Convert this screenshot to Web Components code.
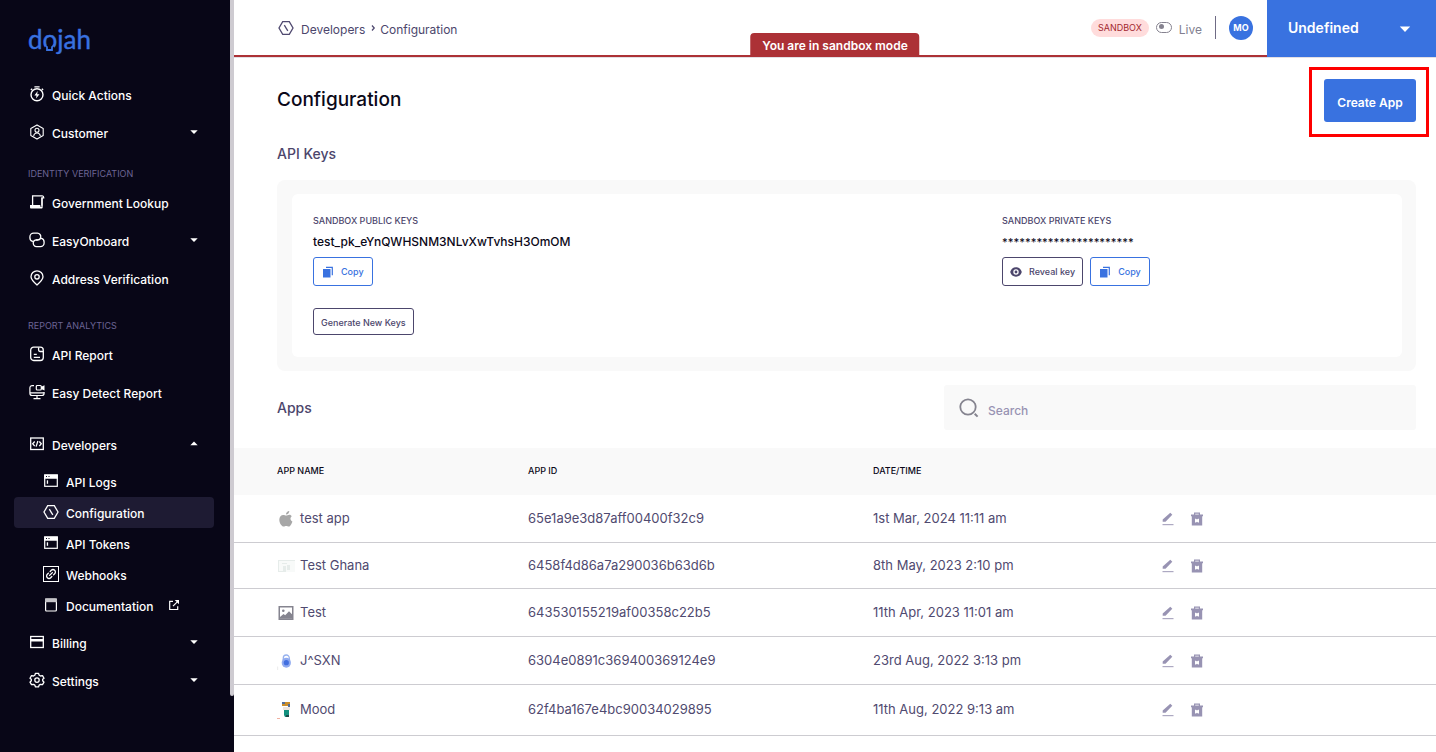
<!DOCTYPE html>
<html lang="en">
<head>
<meta charset="utf-8">
<meta name="viewport" content="width=device-width, initial-scale=1">
<title>Dojah – Configuration</title>
<style>
  html, body { margin: 0; }
  body {
    font-family: Inter, "Liberation Sans", sans-serif;
    font-size: 12px;
    color: #504a70;
    background: #fff;
    --blue: #3972e0;
    --red: #ac3136;
    --ink: #0b0818;
    --muted: #4c466c;
    --panel: #f9f9f9;
  }
</style>
</head>
<body>
<dj-app></dj-app>

<script>
const ICONS = {
  timer: [16, '<g fill="none" stroke="currentColor" stroke-width="1.4"><circle cx="8" cy="8.800" r="6"/><path d="M5.4 .9h5.2M1.900 3.900l1.300-1.200M14.100 3.900l-1.300-1.200"/></g><path fill="currentColor" d="M8.7 5.100 5.400 9.500h2.100l-.5 3.100 3.500-4.300H8.200z"/>'],
  customer: [16, '<g fill="none" stroke="currentColor" stroke-width="1.1"><path d="M8 .9 14.2 4.4v7.2L8 15.1 1.8 11.6V4.4z" stroke-linejoin="round"/><circle cx="8" cy="6.2" r="2"/><path d="M4.7 12.2c.2-2 1.5-3.2 3.3-3.2s3.1 1.200 3.300 3.200"/></g>'],
  scroll: [16, '<path d="M3.600 11V1.800h9.700c.9 0 1.400.6 1.400 2h-1.800v8" fill="none" stroke="currentColor" stroke-width="1.300"/><path fill="currentColor" d="M1 11h10.300v1.700h1.200V4h1.200v9.300c0 .9-.5 1.300-1.300 1.300H2.400C1.400 14.600 1 14 1 13z"/>'],
  rings: [16, '<g fill="none" stroke="currentColor" stroke-width="1.300" stroke-linecap="round"><path d="M3.600 9.400A3.700 3.700 0 0 1 .9 5.800V4.900A3.700 3.700 0 0 1 4.600 1.200h3.800a3.400 3.400 0 0 1 3.300 4.100c-.3 1.800-1.600 2.700-3.300 2.700H7.300"/><path d="M12.400 6.300a3.700 3.700 0 0 1 2.700 3.600v1a3.700 3.700 0 0 1-3.700 3.700H7.600a3.400 3.400 0 0 1-3.300-4.100c.3-1.800 1.600-2.700 3.300-2.700h1.100"/></g>'],
  pin: [16, '<g fill="none" stroke="currentColor" stroke-width="1.300"><path d="M8 15C4.600 12 2 9.600 2 6.800a6 6 0 0 1 12 0C14 9.600 11.400 12 8 15z"/><circle cx="8" cy="6.800" r="2.200"/></g>'],
  report: [16, '<g fill="none" stroke="currentColor" stroke-width="1.300"><rect x="1.700" y="1.200" width="12.600" height="13.300" rx="3"/><path d="M9.600 1.400v2.700c0 .9.500 1.400 1.400 1.400h3M4.800 8.300h3M4.800 11.300h6.200"/></g>'],
  monitor: [16, '<g fill="none" stroke="currentColor" stroke-width="1.200"><path d="M5 1.600H3.200C2 1.600.9 2.300.9 4v5.200c0 1.400.8 2.300 2.300 2.300h9.600c1.500 0 2.300-.9 2.300-2.300V8"/><path d="M1 8.900h14M8 11.500v2.800M4.500 14.600h7"/><rect x="7.300" y="1.500" width="5" height="4.500" rx="1"/></g><path fill="currentColor" d="M12.200 2.700 15.500 1.200v5.200L12.200 5z"/>'],
  code: [16, '<g fill="none" stroke="currentColor" stroke-width="1.300"><rect x="1.700" y="2" width="12.600" height="11.500"/><path d="M5.700 5.500 3.700 7.800l2 2.300M10.300 5.500l2 2.300-2 2.300M8.900 5l-1.800 5.600"/></g>'],
  window: [16, '<rect x="1.700" y="2" width="12.600" height="11.300" fill="none" stroke="currentColor" stroke-width="1.200"/><path fill="currentColor" fill-rule="evenodd" d="M1.200 1.500h13.600v4.300H1.200zM3 3v1h1V3zm2.500 0v1h1V3z"/><path fill="currentColor" d="M3.800 7.300h1.300v3.500H3.800z"/>'],
  hex: [16, '<g fill="none" stroke="currentColor" stroke-width="1.300"><path d="M4.700 1.700h6.600L15 8l-3.700 6.300H4.700L1 8z"/><path d="m6.300 5.200 3.500 5.600"/></g>'],
  link: [16, '<rect x=".500" y=".500" width="15" height="15" fill="none" stroke="currentColor" stroke-width="1"/><g transform="translate(8 8) rotate(-45)" fill="none" stroke="currentColor" stroke-width="1.300" stroke-linecap="round"><path d="M-1.200 2.400h-1.600a2.400 2.400 0 0 1 0-4.800h1.600M1.200-2.400h1.600a2.400 2.400 0 0 1 0 4.800H1.200M-2 0h4"/></g>'],
  doc: [16, '<rect x="2.600" y="2" width="10.800" height="12" rx="1" fill="none" stroke="currentColor" stroke-width="1.200"/><path fill="#c4c3c8" d="M2 1.400h12v3.800H2z"/>'],
  external: [12, '<g fill="none" stroke="currentColor" stroke-width="1.200"><path d="M5 2.300H1.700v8.200h8V7.200"/><path d="m5 7.200 5.300-5.300"/></g><path fill="currentColor" d="M6.700.9H11v4.300z"/>'],
  card: [16, '<rect x="1.700" y="2.500" width="12.600" height="11" fill="none" stroke="currentColor" stroke-width="1.300"/><path fill="currentColor" d="M1.200 5h13.600v2.500H1.200z"/>'],
  gear: [16, '<g fill="none" stroke="currentColor" stroke-width="1.300" stroke-linejoin="round"><path d="M6.500 1.300h3l.7 2 1.300.7 2-.4 1.500 2.600L13.700 7.300v1.400L15 10.200l-1.500 2.500-2-.4-1.300.8-.7 1.800h-3l-.7-1.800-1.300-.8-2 .4L1 10.200l1.300-1.500V7.300L1 6.200l1.500-2.600 2 .4 1.300-.7z"/><circle cx="8" cy="8.100" r="2.200"/></g>'],
  down: [8, '<path fill="currentColor" d="M.3 2.200h7.400L4 6z"/>'],
  up: [8, '<path fill="currentColor" d="M.3 5.200h7.400L4 1.400z"/>'],
  caret: [12, '<path fill="currentColor" d="M.8 3.500h10.400L6 9z"/>'],
  chevron: [8, '<path d="m3 1.500 2.200 2.500L3 6.500" fill="none" stroke="currentColor" stroke-width="1.300"/>'],
  copy: [12, '<path fill="currentColor" d="M1 3h7.500v8.500H1z"/><path d="M4 1.300h6.300v8" fill="none" stroke="currentColor" stroke-width="1.200"/>'],
  eye: [12, '<path fill="currentColor" fill-rule="evenodd" d="M6 1.300c2.900 0 5 1.900 5.800 4.700C11 8.800 8.900 10.700 6 10.700S1 8.800.2 6C1 3.200 3.100 1.300 6 1.300zM6 3.300a2.700 2.700 0 1 0 0 5.400 2.700 2.700 0 0 0 0-5.400z"/><circle cx="6" cy="6" r="1.400" fill="currentColor"/>'],
  search: [20, '<g fill="none" stroke="currentColor"><circle cx="9" cy="9" r="7.700" stroke-width="1.800"/><path d="m15.700 15.700 2.900 2.900" stroke-width="2"/></g>'],
  edit: [14, '<path fill="currentColor" d="m9.300.8 2 2-6.800 7H1.700V7.600z"/><path fill="currentColor" opacity=".8" d="M1.500 12h11v1.200h-11z"/>'],
  trash: [14, '<path fill="currentColor" fill-rule="evenodd" d="M4 2.500V.5h6v2h3v1.700h-.8v9.300H1.800V4.200H1V2.500zM5.200 1.700v.8h3.600v-.8zM5 6.700v3.800h1l1-.8 1 .8h1V6.700H8l-1 .8-1-.8z"/>'],
  apple: [18, '<path fill="#a7a7a7" d="M12.300 1c.1 1.800-1.500 3.600-3.300 3.500C8.800 2.800 10.500 1.100 12.300 1zM14.800 6.300c-1.900 1.200-1.800 4.100.6 5.100-.5 1.900-2.100 5.200-3.700 5.200-.9 0-1.400-.6-2.500-.6s-1.600.6-2.500.6C4.800 16.600 2.300 13 2.300 9.700c0-3 1.900-4.800 3.900-4.800 1.200 0 2 .7 2.900.7s1.800-.8 3.300-.8c1 0 1.900.6 2.400 1.500z"/>'],
  sheet: [18, '<path fill="#f8faf9" d="M1 3h17v12H1z"/><path fill="#e6ecea" d="M1 3h17v1H1zM5 6h5v1H5zM6 9h3v6H6zM10 8h3v5h-3zM1 14h6v1H1zM1 4h1v10H1z"/>'],
  image: [18, '<path fill="#85848f" fill-rule="evenodd" d="M1.500 2h15v14h-15zM3 3.400v11.200h12V3.400z"/><circle cx="6.300" cy="6.800" r="1.300" fill="#85848f"/><path fill="#85848f" d="m3 13 3.500-3 1.700 1.200L12 7.300l3 3v4.400H3z"/>'],
  lock: [18, '<path d="M6.300 8V6a3 3 0 0 1 6 0v2" fill="none" stroke="#96b1ee" stroke-width="1.300"/><ellipse cx="9.300" cy="10.700" rx="4.600" ry="5" fill="#8faaf0"/><circle cx="9.300" cy="10.700" r="2.600" fill="#426fe0"/><path fill="#ddd" d="M.5 14.500h.6V18H.5z"/>'],
  mood: [18, '<path fill="#c98d2b" d="M5 1h8v4H5z"/><path fill="#546d98" d="M5 1h3v2H5zM11 3h2v3h-2z"/><path fill="#eee5dd" d="M6 6h7v3H6z"/><path fill="#12917f" d="M7 9h5v5l-1 2H8l-1-2z"/><path fill="#204a49" d="M9 14h3v2H9z"/><path fill="#f0b0a0" d="M0 17h3v1H0z"/>'],
};

const define = (name, html, setup) => {
  const template = document.createElement('template');
  template.innerHTML = html;
  customElements.define(name, class extends HTMLElement {
    connectedCallback() {
      if (this.shadowRoot) return;
      this.attachShadow({ mode: 'open' }).append(template.content.cloneNode(true));
      if (setup) setup(this, this.shadowRoot);
    }
  });
};

define('dj-icon', `<style>
  :host { display: inline-flex; flex: none; }
  svg { display: block; }
</style>`, (el, root) => {
  const [size, body] = ICONS[el.getAttribute('name')];
  root.innerHTML += `<svg width="${size}" height="${size}" viewBox="0 0 ${size} ${size}" aria-hidden="true">${body}</svg>`;
});

define('dj-logo', `<style>
  :host { display: block; height: 76px; padding-left: 28px; box-sizing: border-box; padding-top: 22px; }
  a { position: relative; display: inline-block; font: 400 26px/34px Lato, sans-serif; color: var(--blue); text-decoration: none; -webkit-text-stroke: 0.4px currentColor; }
  svg { position: absolute; left: 16px; top: 22px; }
</style>
<a href="#home">dojah<svg width="12" height="8" aria-hidden="true"><path fill="#080617" d="M1 1h9v7H1z"/><path d="M.5.5 3 3v3h5V3l2.500-2.500" fill="none" stroke="#3972e0" stroke-width="1.800"/></svg></a>`);

define('dj-nav-item', `<style>
  :host { display: block; }
  a, button {
    display: flex; align-items: center; gap: 7px; width: 100%; height: 38px; box-sizing: border-box;
    padding: 0 32px 0 29px; margin: 0; border: 0; background: none;
    font: 500 12px/16px Inter, sans-serif; color: #fff; text-align: left; text-decoration: none;
  }
  .label { padding-top: 2px; }
  .chev { margin-left: auto; }
  .ext { margin-left: 7px; }
  dj-icon { margin-bottom: 2px; }
  :host([sub]) a { height: 31px; padding: 0 0 0 29px; margin: 0 16px 0 14px; width: auto; border-radius: 4px; }
  :host([active]) a { background: #1e1b33; }
</style>`, (el, root) => {
  const chev = el.getAttribute('chevron');
  const inner = `<dj-icon name="${el.getAttribute('icon')}"></dj-icon><span class="label"><slot></slot></span>`
    + (chev ? `<dj-icon class="chev" name="${chev}"></dj-icon>` : '')
    + (el.hasAttribute('external') ? '<dj-icon class="ext" name="external"></dj-icon>' : '');
  root.innerHTML += chev
    ? `<button type="button" aria-expanded="${chev === 'up'}">${inner}</button>`
    : `<a href="#"${el.hasAttribute('active') ? ' aria-current="page"' : ''}>${inner}</a>`;
});

define('dj-nav-heading', `<style>
  :host { display: block; padding: 12px 0 0 28px; font-size: 9px; line-height: 20px; color: #6b6494; }
</style><slot></slot>`);

define('dj-sidebar', `<style>
  :host { display: flex; background: #080617; }
  nav { flex: 1; min-width: 0; }
  .track { width: 4px; }
  .thumb { height: 696px; max-height: 100%; background: #cecbd1; border-radius: 0 0 2px 2px; }
  .analytics { margin-top: 6px; }
  .developers { margin-top: 14px; }
  .group { padding: 2px 0 3px; }
</style>
<nav aria-label="Main">
  <dj-logo></dj-logo>
  <dj-nav-item icon="timer">Quick Actions</dj-nav-item>
  <dj-nav-item icon="customer" chevron="down">Customer</dj-nav-item>
  <dj-nav-heading>IDENTITY VERIFICATION</dj-nav-heading>
  <dj-nav-item icon="scroll">Government Lookup</dj-nav-item>
  <dj-nav-item icon="rings" chevron="down">EasyOnboard</dj-nav-item>
  <dj-nav-item icon="pin">Address Verification</dj-nav-item>
  <dj-nav-heading class="analytics">REPORT ANALYTICS</dj-nav-heading>
  <dj-nav-item icon="report">API Report</dj-nav-item>
  <dj-nav-item icon="monitor">Easy Detect Report</dj-nav-item>
  <dj-nav-item class="developers" icon="code" chevron="up">Developers</dj-nav-item>
  <div class="group">
    <dj-nav-item sub icon="window">API Logs</dj-nav-item>
    <dj-nav-item sub active icon="hex">Configuration</dj-nav-item>
    <dj-nav-item sub icon="window">API Tokens</dj-nav-item>
    <dj-nav-item sub icon="link">Webhooks</dj-nav-item>
    <dj-nav-item sub icon="doc" external>Documentation</dj-nav-item>
  </div>
  <dj-nav-item icon="card" chevron="down">Billing</dj-nav-item>
  <dj-nav-item icon="gear" chevron="down">Settings</dj-nav-item>
</nav>
<div class="track"><div class="thumb"></div></div>`);

define('dj-topbar', `<style>
  :host { display: flex; position: relative; height: 57px; border-bottom: 1px solid #e3dfe4; }
  .bar { flex: 1; display: flex; align-items: center; box-sizing: border-box; padding: 0 14px 0 44px; border-bottom: 2px solid var(--red); }
  nav { display: flex; align-items: center; gap: 7px; font-size: 12px; line-height: 16px; }
  nav a, nav span { color: var(--muted); text-decoration: none; padding-top: 4px; }
  nav .sep { margin: 0 -4px 0 -3px; }
  .tools { margin-left: auto; display: flex; align-items: center; gap: 7px; }
  .pill { padding: 0 7px; border-radius: 9px; background: #ffdcdc; color: #a3282f; font-size: 9px; line-height: 18px; }
  label { display: flex; align-items: center; gap: 7px; color: #827f90; line-height: 16px; }
  label span { padding-top: 4px; }
  input { appearance: none; width: 16px; height: 11px; margin: 0; padding: 1px; box-sizing: border-box; border: 1px solid #85828f; border-radius: 6px; }
  input::before { content: ""; display: block; width: 5px; height: 5px; margin-left: 1px; border-radius: 50%; background: #85828f; }
  .rule { width: 1px; height: 23px; margin: 0 6px; background: #6f6b85; }
  .avatar { width: 24px; height: 24px; padding: 0; border: 0; border-radius: 50%; background: var(--blue); color: #fff; font: 700 9px/24px Inter, sans-serif; }
  .mode { position: absolute; left: 50%; bottom: 0; transform: translateX(-50%); padding: 5px 12px 3px; border-radius: 4px 4px 0 0; background: var(--red); color: #fff; font-weight: 600; font-size: 12px; line-height: 16px; white-space: nowrap; }
  .account { width: 169px; display: grid; align-items: center; background: var(--blue); color: #fff; }
  .account > * { grid-area: 1 / 1; }
  select { appearance: none; width: 100%; height: 57px; margin: 0; padding: 0 36px 2px 21px; border: 0; background: none; color: #fff; font: 600 14px/20px Inter, sans-serif; }
  .account dj-icon { justify-self: end; margin-right: 25px; pointer-events: none; }
</style>
<div class="bar">
  <nav aria-label="Breadcrumb">
    <dj-icon name="hex"></dj-icon>
    <a href="#developers">Developers</a>
    <dj-icon class="sep" name="chevron"></dj-icon>
    <span aria-current="page">Configuration</span>
  </nav>
  <div class="tools">
    <span class="pill">SANDBOX</span>
    <label><input type="checkbox"><span>Live</span></label>
    <div class="rule"></div>
    <button class="avatar" type="button" aria-label="Profile">MO</button>
  </div>
</div>
<div class="account">
  <select aria-label="Account"><option>Undefined</option></select>
  <dj-icon name="caret"></dj-icon>
</div>
<div class="mode">You are in sandbox mode</div>`);

define('dj-key-button', `<style>
  :host { display: inline-flex; }
  button { display: inline-flex; align-items: center; gap: 7px; height: 29px; box-sizing: border-box; margin: 0; padding: 0 7px; border: 1px solid currentColor; border-radius: 3px; background: #fff; color: var(--muted); font: 500 9px/12px Inter, sans-serif; white-space: nowrap; }
  :host([primary]) button { color: var(--blue); padding: 0 8px; }
  :host([short]) button { height: 27px; padding-top: 2px; }
</style>
<button type="button"><slot name="icon"></slot><span><slot></slot></span></button>`);

define('dj-key-field', `<style>
  :host { display: block; }
  .name { font-size: 9px; line-height: 12px; font-weight: 500; color: var(--muted); }
  .value { margin: 6px 0; height: 18px; font-size: 12px; line-height: 18px; font-weight: 500; color: var(--ink); }
  .actions { display: flex; gap: 7px; }
</style>
<div class="name"><slot name="name"></slot></div>
<div class="value"><slot name="value"></slot></div>
<div class="actions"><slot></slot></div>`);

define('dj-keys', `<style>
  :host { display: block; padding: 14px 14px 14px 15px; border-radius: 8px; background: var(--panel); }
  .card { display: grid; grid-template-columns: 20fr 11fr; padding: 21px 21px 22px; border-radius: 6px; background: #fff; }
  .generate { margin-top: 22px; }
  .masked { font-size: 11px; }
</style>
<div class="card">
  <div>
    <dj-key-field>
      <span slot="name">SANDBOX PUBLIC KEYS</span>
      <span slot="value">test_pk_eYnQWHSNM3NLvXwTvhsH3OmOM</span>
      <dj-key-button primary><dj-icon slot="icon" name="copy"></dj-icon>Copy</dj-key-button>
    </dj-key-field>
    <dj-key-button short class="generate">Generate New Keys</dj-key-button>
  </div>
  <dj-key-field>
    <span slot="name">SANDBOX PRIVATE KEYS</span>
    <span slot="value" class="masked">***********************</span>
    <dj-key-button><dj-icon slot="icon" name="eye"></dj-icon>Reveal key</dj-key-button>
    <dj-key-button primary><dj-icon slot="icon" name="copy"></dj-icon>Copy</dj-key-button>
  </dj-key-field>
</div>`);

define('dj-search', `<style>
  :host { display: block; width: 472px; }
  label { display: flex; align-items: center; gap: 9px; height: 45px; padding-left: 15px; border-radius: 3px; background: var(--panel); color: #85848f; }
  input { flex: 1; min-width: 0; height: 45px; box-sizing: border-box; margin: 0; padding: 6px 0 0; border: 0; background: none; outline: 0; font: 500 12px/16px Inter, sans-serif; color: var(--muted); }
  input::placeholder { color: #9893b3; opacity: 1; }
</style>
<label><dj-icon name="search"></dj-icon><input type="search" placeholder="Search" aria-label="Search apps"></label>`);

const APPS = [
  ['apple', 'test app', '65e1a9e3d87aff00400f32c9', '1st Mar, 2024 11:11 am'],
  ['sheet', 'Test Ghana', '6458f4d86a7a290036b63d6b', '8th May, 2023 2:10 pm'],
  ['image', 'Test', '643530155219af00358c22b5', '11th Apr, 2023 11:01 am'],
  ['lock', 'J^SXN', '6304e0891c369400369124e9', '23rd Aug, 2022 3:13 pm'],
  ['mood', 'Mood', '62f4ba167e4bc90034029895', '11th Aug, 2022 9:13 am'],
];

define('dj-apps-table', `<style>
  :host { display: block; }
  table { width: 100%; border-collapse: separate; border-spacing: 0; table-layout: fixed; }
  th, td { padding: 0 0 2px; text-align: left; box-sizing: border-box; }
  th { height: 47px; background: var(--panel); color: var(--ink); font-size: 9px; line-height: 12px; font-weight: 500; }
  td { height: 48px; border-bottom: 1px solid #cdccd1; font-size: 13px; line-height: 18px; }
  tr:nth-child(2) td { height: 46px; }
  tr:nth-child(5) td { height: 51px; }
  th:first-child, td:first-child { padding-left: 43px; width: 294px; }
  th:nth-child(2) { width: 345px; }
  th:nth-child(3) { width: 288px; }
  td:last-child { padding-bottom: 0; }
  .app { display: flex; align-items: center; gap: 5px; }
  .app dj-icon { margin-top: 2px; }
  .actions { display: flex; align-items: center; gap: 15px; }
  button { display: flex; margin: 0; padding: 0; border: 0; background: none; color: #9893b3; }
</style>
<table>
  <thead><tr><th>APP NAME</th><th>APP ID</th><th>DATE/TIME</th><th></th></tr></thead>
  <tbody></tbody>
</table>`, (el, root) => {
  root.querySelector('tbody').innerHTML = APPS.map(([icon, name, id, date]) => `<tr>
    <td><div class="app"><dj-icon name="${icon}"></dj-icon><span>${name}</span></div></td>
    <td>${id}</td><td>${date}</td>
    <td><div class="actions"><button type="button" aria-label="Edit"><dj-icon name="edit"></dj-icon></button><button type="button" aria-label="Delete"><dj-icon name="trash"></dj-icon></button></div></td>
  </tr>`).join('');
});

define('dj-app', `<style>
  :host { display: grid; grid-template-columns: 234px minmax(0, 1fr); min-height: 100vh; }
  .content { padding: 0 20px 0 43px; }
  .head { display: flex; justify-content: space-between; align-items: center; padding-top: 21px; }
  h1, h2 { margin: 0; font-weight: 500; }
  h1 { font-size: 19px; line-height: 24px; padding-bottom: 2px; color: var(--ink); }
  h2 { font-size: 14px; line-height: 20px; color: var(--muted); }
  .keys { margin: 22px 0 16px; }
  .create { position: relative; }
  .create::after { content: ""; position: absolute; inset: -12px -13px -15px -15px; border: 3px solid #fe0000; pointer-events: none; }
  .create button { display: block; width: 92px; height: 43px; margin: 0; padding: 4px 0 0; border: 0; border-radius: 3px; background: var(--blue); color: #fff; font: 600 12px/16px Inter, sans-serif; }
  .apps { display: flex; justify-content: space-between; align-items: center; padding: 14px 0 18px; }
</style>
<dj-sidebar></dj-sidebar>
<main>
  <dj-topbar></dj-topbar>
  <div class="content">
    <div class="head">
      <h1>Configuration</h1>
      <div class="create"><button type="button">Create App</button></div>
    </div>
    <h2 class="keys">API Keys</h2>
    <dj-keys></dj-keys>
    <div class="apps"><h2>Apps</h2><dj-search></dj-search></div>
  </div>
  <dj-apps-table></dj-apps-table>
</main>`);
</script>
</body>
</html>
